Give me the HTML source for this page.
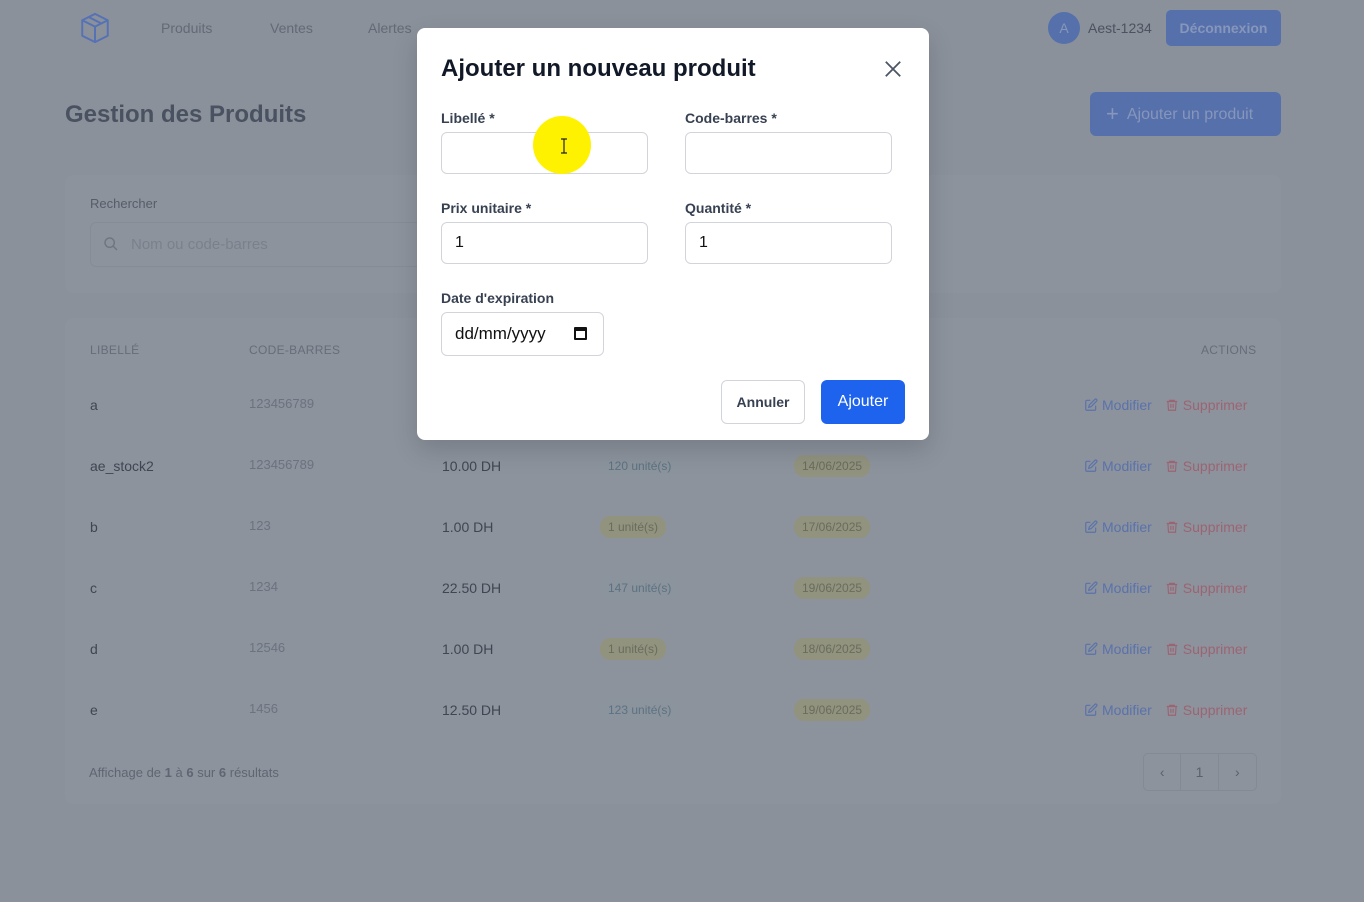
<!DOCTYPE html>
<html><head><meta charset="utf-8"><style>
*{box-sizing:border-box;margin:0;padding:0}
body{width:1364px;height:902px;overflow:hidden;background:#8a919b;font-family:"Liberation Sans",sans-serif;position:relative;color:#3f4652}
.a{position:absolute;white-space:nowrap}
.nav{font-size:14px;color:#636a76}
.card{position:absolute;background:#8c939d;border-radius:8px}
.th{font-size:12px;color:#666d79;letter-spacing:.3px}
.td{font-size:14px}
.pill{position:absolute;font-size:12px;padding:4px 8px;border-radius:10px}
.pb{background:#8b939d;color:#5b7282}
.py{background:#91937f;color:#6a6c5c}
.blue{color:#5a72ab;font-size:14px}
.red{color:#9c6472;font-size:14px}
.modal{position:absolute;left:417px;top:28px;width:512px;height:412px;background:#fff;border-radius:8px;box-shadow:0 10px 25px rgba(0,0,0,.15)}
.lbl{position:absolute;font-size:14px;font-weight:bold;color:#374151}
.inp{position:absolute;border:1px solid #d1d5db;border-radius:6px;height:42px;font-size:16px;color:#111;padding:11px 13px;background:#fff}
.act{position:absolute;left:1084px;display:flex;align-items:center;gap:4px;height:17px}
</style></head><body>
<svg class="a" style="left:78px;top:11px" width="34" height="34" viewBox="0 0 24 24" fill="none" stroke="#5672b4" stroke-width="1.4" stroke-linejoin="round"><path d="M12 2l9 4.5v11L12 22l-9-4.5v-11z"/><path d="M3 6.5l9 4.5 9-4.5M12 11v11M7.5 4.2l9 4.6"/></svg>
<div class="a nav" style="left:161px;top:20px">Produits</div>
<div class="a nav" style="left:270px;top:20px">Ventes</div>
<div class="a nav" style="left:368px;top:20px">Alertes</div>
<div class="a" style="left:1048px;top:12px;width:32px;height:32px;border-radius:16px;background:#5570ab;color:#8796bb;font-size:14px;text-align:center;line-height:32px">A</div>
<div class="a" style="left:1088px;top:20px;font-size:14px;color:#4b5260">Aest-1234</div>
<div class="a" style="left:1166px;top:10px;width:115px;height:36px;border-radius:5px;background:#5570ab;color:#8796bb;font-size:14px;font-weight:bold;text-align:center;line-height:36px">Déconnexion</div>
<div class="a" style="left:65px;top:101px;font-size:24px;font-weight:bold;color:#4a5261">Gestion des Produits</div>
<div class="a" style="left:1090px;top:92px;width:191px;height:44px;border-radius:6px;background:#5570ab;color:#8796bb;font-size:16px;line-height:44px;padding-left:16px"><span style="font-size:22px;vertical-align:-2px">+</span>&nbsp; Ajouter un produit</div>
<div class="card" style="left:65px;top:175px;width:1216px;height:118px"></div>
<div class="a" style="left:90px;top:196px;font-size:13px;color:#565d69">Rechercher</div>
<div class="a" style="left:90px;top:222px;width:340px;height:45px;border:1px solid #858c97;border-radius:6px"></div>
<svg class="a" style="left:103px;top:236px" width="16" height="16" viewBox="0 0 24 24" fill="none" stroke="#6f7682" stroke-width="2.2"><circle cx="10" cy="10" r="7"/><path d="M15 15l6 6"/></svg>
<div class="a" style="left:131px;top:236px;font-size:15px;color:#7a818c">Nom ou code-barres</div>
<div class="card" style="left:65px;top:318px;width:1216px;height:486px"></div>
<div class="a th" style="left:90px;top:343px">LIBELLÉ</div>
<div class="a th" style="left:249px;top:343px">CODE-BARRES</div>
<div class="a th" style="left:1201px;top:343px">ACTIONS</div>

<div class="a td" style="left:90px;top:397px">a</div><div class="a td" style="left:249px;top:396px;color:#6b7280;font-size:13px">123456789</div>
<div class="a td" style="left:90px;top:458px">ae_stock2</div><div class="a td" style="left:249px;top:457px;color:#6b7280;font-size:13px">123456789</div>
<div class="a td" style="left:442px;top:458px">10.00 DH</div>
<div class="pill pb" style="left:600px;top:455px">120 unité(s)</div>
<div class="pill py" style="left:794px;top:455px">14/06/2025</div>
<div class="a td" style="left:90px;top:519px">b</div><div class="a td" style="left:249px;top:518px;color:#6b7280;font-size:13px">123</div>
<div class="a td" style="left:442px;top:519px">1.00 DH</div>
<div class="pill py" style="left:600px;top:516px">1 unité(s)</div>
<div class="pill py" style="left:794px;top:516px">17/06/2025</div>
<div class="a td" style="left:90px;top:580px">c</div><div class="a td" style="left:249px;top:579px;color:#6b7280;font-size:13px">1234</div>
<div class="a td" style="left:442px;top:580px">22.50 DH</div>
<div class="pill pb" style="left:600px;top:577px">147 unité(s)</div>
<div class="pill py" style="left:794px;top:577px">19/06/2025</div>
<div class="a td" style="left:90px;top:641px">d</div><div class="a td" style="left:249px;top:640px;color:#6b7280;font-size:13px">12546</div>
<div class="a td" style="left:442px;top:641px">1.00 DH</div>
<div class="pill py" style="left:600px;top:638px">1 unité(s)</div>
<div class="pill py" style="left:794px;top:638px">18/06/2025</div>
<div class="a td" style="left:90px;top:702px">e</div><div class="a td" style="left:249px;top:701px;color:#6b7280;font-size:13px">1456</div>
<div class="a td" style="left:442px;top:702px">12.50 DH</div>
<div class="pill pb" style="left:600px;top:699px">123 unité(s)</div>
<div class="pill py" style="left:794px;top:699px">19/06/2025</div>

<svg width="0" height="0" style="position:absolute"><defs>
<symbol id="ed" viewBox="0 0 24 24"><path d="M11 4H5a2 2 0 0 0-2 2v13a2 2 0 0 0 2 2h13a2 2 0 0 0 2-2v-6" fill="none" stroke="#5a72ab" stroke-width="2"/><path d="M18.5 2.5a2.1 2.1 0 0 1 3 3L12 15l-4 1 1-4z" fill="none" stroke="#5a72ab" stroke-width="2"/></symbol>
<symbol id="tr" viewBox="0 0 24 24"><path d="M3 6h18M8 6V4h8v2M5 6l1 15h12l1-15M10 10v7M14 10v7" fill="none" stroke="#9c6472" stroke-width="2"/></symbol></defs></svg>
<div class="act" style="top:396px"><svg width="14" height="14"><use href="#ed"/></svg><span class="blue">Modifier</span><svg width="14" height="14" style="margin-left:9px"><use href="#tr"/></svg><span class="red">Supprimer</span></div>
<div class="act" style="top:457px"><svg width="14" height="14"><use href="#ed"/></svg><span class="blue">Modifier</span><svg width="14" height="14" style="margin-left:9px"><use href="#tr"/></svg><span class="red">Supprimer</span></div>
<div class="act" style="top:518px"><svg width="14" height="14"><use href="#ed"/></svg><span class="blue">Modifier</span><svg width="14" height="14" style="margin-left:9px"><use href="#tr"/></svg><span class="red">Supprimer</span></div>
<div class="act" style="top:579px"><svg width="14" height="14"><use href="#ed"/></svg><span class="blue">Modifier</span><svg width="14" height="14" style="margin-left:9px"><use href="#tr"/></svg><span class="red">Supprimer</span></div>
<div class="act" style="top:640px"><svg width="14" height="14"><use href="#ed"/></svg><span class="blue">Modifier</span><svg width="14" height="14" style="margin-left:9px"><use href="#tr"/></svg><span class="red">Supprimer</span></div>
<div class="act" style="top:701px"><svg width="14" height="14"><use href="#ed"/></svg><span class="blue">Modifier</span><svg width="14" height="14" style="margin-left:9px"><use href="#tr"/></svg><span class="red">Supprimer</span></div>

<div class="a" style="left:89px;top:765px;font-size:13px;color:#5f6672">Affichage de <b>1</b> à <b>6</b> sur <b>6</b> résultats</div>
<div class="a" style="left:1143px;top:753px;width:114px;height:38px;border:1px solid #838a95;border-radius:5px;display:flex;font-size:14px;color:#5a616d">
<div style="width:38px;text-align:center;line-height:36px;border-right:1px solid #838a95">‹</div>
<div style="width:38px;text-align:center;line-height:36px;border-right:1px solid #838a95">1</div>
<div style="width:38px;text-align:center;line-height:36px">›</div></div>

<div class="modal">
<div class="a" style="left:24px;top:27px;font-size:24px;font-weight:bold;color:#111827">Ajouter un nouveau produit</div>
<svg class="a" style="left:467px;top:32px" width="18" height="18" viewBox="0 0 20 20" stroke="#4b5563" stroke-width="2"><path d="M2 2l16 16M18 2L2 18"/></svg>
<div class="lbl" style="left:24px;top:82px">Libellé *</div>
<div class="lbl" style="left:268px;top:82px">Code-barres *</div>
<div class="inp" style="left:24px;top:104px;width:207px"></div>
<div class="inp" style="left:268px;top:104px;width:207px"></div>
<div class="a" style="left:116px;top:88px;width:58px;height:58px;border-radius:29px;background:#fff200"></div>
<svg class="a" style="left:143px;top:110px" width="8" height="16" viewBox="0 0 8 16" stroke="#222" stroke-width="1.2" fill="none"><path d="M1 1h6M1 15h6M4 1v14"/></svg>
<div class="lbl" style="left:24px;top:172px">Prix unitaire *</div>
<div class="lbl" style="left:268px;top:172px">Quantité *</div>
<div class="inp" style="left:24px;top:194px;width:207px">1</div>
<div class="inp" style="left:268px;top:194px;width:207px">1</div>
<div class="lbl" style="left:24px;top:262px">Date d'expiration</div>
<div class="inp" style="left:24px;top:284px;width:163px;height:44px;font-size:17px">dd/mm/yyyy</div>
<div class="a" style="left:157px;top:299px;width:13px;height:13px;border:2px solid #111;border-top-width:4px;border-radius:1px"></div>
<div class="a" style="left:304px;top:352px;width:84px;height:44px;border:1px solid #d1d5db;border-radius:6px;text-align:center;line-height:42px;font-size:14px;font-weight:bold;color:#374151">Annuler</div>
<div class="a" style="left:404px;top:352px;width:84px;height:44px;background:#1d63ed;border-radius:6px;text-align:center;line-height:44px;font-size:16px;color:#fff">Ajouter</div>
</div>
</body></html>
